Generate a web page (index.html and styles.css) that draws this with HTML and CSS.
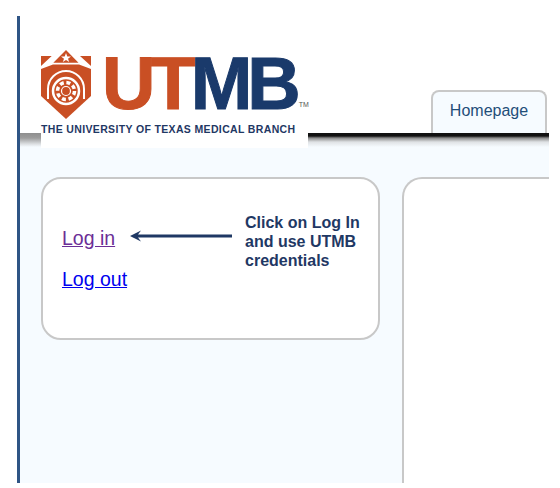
FILE: index.html
```html
<!DOCTYPE html>
<html lang="en">
<head>
  <meta charset="UTF-8" />
  <title>UTMB Homepage</title>
  <link rel="stylesheet" href="styles.css">
</head>
<body>
  <div class="page">
    <div class="header">
      <div class="logo">
        <div class="logo-top">
          <svg class="shield" width="50" height="70" viewBox="0 0 50 70">
            <path fill="#c94f24" d="M0 7 L10.7 7 L0 17 Z M25 1 L37.5 13.7 L12.3 13.7 Z M39 7 L50 7 L50 17 Z"/>
            <path fill="#c94f24" d="M0 20 L12 15.5 L38 15.5 L50 20 L50 47 L25 70 L0 47 Z"/>
            <polygon fill="#fff" points="25,4 26.3,7.6 30,7.6 27,9.8 28.2,13 25,11 21.8,13 23,9.8 20,7.6 23.7,7.6"/>
            <path fill="none" stroke="#fff" stroke-width="2" d="M7 50 L7 40 A18 18 0 0 1 43 40 L43 50"/>
            <circle cx="25" cy="42" r="13" fill="none" stroke="#fff" stroke-width="2.5"/>
            <circle cx="25" cy="42" r="8.5" fill="none" stroke="#fff" stroke-width="3.5" stroke-dasharray="4 2.7"/>
            <circle cx="25" cy="42" r="4.5" fill="#c94f24" stroke="#fff" stroke-width="1.2"/>
          </svg>
          <div class="wordmark"><span class="ut">UT</span><span class="mb">MB</span></div>
          <span class="tm">TM</span>
        </div>
        <div class="tagline">THE UNIVERSITY OF TEXAS MEDICAL BRANCH</div>
      </div>
      <div class="tab">Homepage</div>
    </div>
    <div class="rule"></div>
    <div class="main">
      <div class="card login">
        <div class="links">
          <a class="visited" href="#">Log in</a>
          <a href="#">Log out</a>
        </div>
        <svg class="arrow" width="102" height="14" viewBox="0 0 102 14">
          <path fill="#1f3864" d="M0 7 L11 1.5 L8 5.5 L102 5.5 L102 8.5 L8 8.5 L11 12.5 Z"/>
        </svg>
        <div class="note">Click on Log In<br>and use UTMB<br>credentials</div>
      </div>
      <div class="card content"></div>
    </div>
  </div>
</body>
</html>
```

FILE: styles.css
```css
html, body {
  margin: 0;
  height: 100%;
  background: #fff;
  overflow: hidden;
}

body {
  font-family: "Liberation Sans", Arial, sans-serif;
}

.page {
  margin: 16px 0 0 17px;
  width: 529px;
  height: 467px;
  border-left: 3px solid #2f5585;
  display: flex;
  flex-direction: column;
  position: relative;
}

.header {
  height: 117px;
  flex-shrink: 0;
  display: flex;
  justify-content: space-between;
  align-items: flex-end;
  position: relative;
  z-index: 1;
}

.logo {
  width: 267px;
  height: 116px;
  margin: 0 0 -15px 21px;
  background: #fff;
  box-sizing: border-box;
  padding-top: 17px;
}

.logo-top {
  display: flex;
  align-items: flex-start;
  height: 70px;
}

.shield {
  flex-shrink: 0;
}

.wordmark {
  font-size: 74px;
  font-weight: bold;
  line-height: 70px;
  letter-spacing: -5px;
  margin-left: 11px;
  -webkit-text-stroke: 1px currentColor;
}

.ut {
  color: #c94f24;
}

.mb {
  color: #1a3a6b;
}

.tm {
  font-size: 7px;
  color: #555;
  margin: 52px 0 0 3px;
}

.tagline {
  font-size: 10.5px;
  font-weight: bold;
  color: #1f3864;
  letter-spacing: 0.35px;
  white-space: nowrap;
  margin-top: 4px;
}

.tab {
  width: 116px;
  height: 43px;
  margin-right: 2px;
  box-sizing: border-box;
  border: 2px solid #c8c8c8;
  border-bottom: none;
  border-radius: 8px 8px 0 0;
  background: #f6fbff;
  color: #1f4e79;
  font-size: 16px;
  text-align: center;
  line-height: 38px;
}

.rule {
  height: 14px;
  flex-shrink: 0;
  background: linear-gradient(#111 0, #111 3px, #8a8a8a 5px, #dfe2e5 9px, #f6fbff 14px);
}

/* the stretch left of the logo is only grey, no black line */
.rule::before {
  content: "";
  display: block;
  width: 21px;
  height: 100%;
  background: linear-gradient(#8e8e8e 0, #9c9c9c 5px, #dcdfe2 11px, #f6fbff 14px);
}

.main {
  flex: 1;
  background: #f6fbff;
  display: flex;
  align-items: flex-start;
  padding: 30px 0 0 21px;
  gap: 22px;
  overflow: hidden;
}

.card {
  background: #fff;
  border: 2px solid #c8c8c8;
  border-radius: 20px;
  box-sizing: border-box;
}

.login {
  width: 339px;
  height: 163px;
  flex-shrink: 0;
  display: flex;
  align-items: flex-start;
  padding-left: 19px;
}

.links {
  width: 68px;
  flex-shrink: 0;
  margin-top: 48px;
  display: flex;
  flex-direction: column;
  gap: 19px;
  font-size: 19.5px;
  line-height: 22px;
}

.links a {
  color: #0000ee;
}

.links a.visited {
  color: #6b2e96;
}

.arrow {
  flex-shrink: 0;
  margin-top: 50px;
}

.note {
  margin: 34px 0 0 13px;
  font-size: 16px;
  font-weight: bold;
  line-height: 19px;
  color: #1f3864;
  white-space: nowrap;
}

.content {
  flex: 1;
  height: 500px;
  border-right: none;
  border-bottom: none;
  border-radius: 20px 0 0 0;
}
```
